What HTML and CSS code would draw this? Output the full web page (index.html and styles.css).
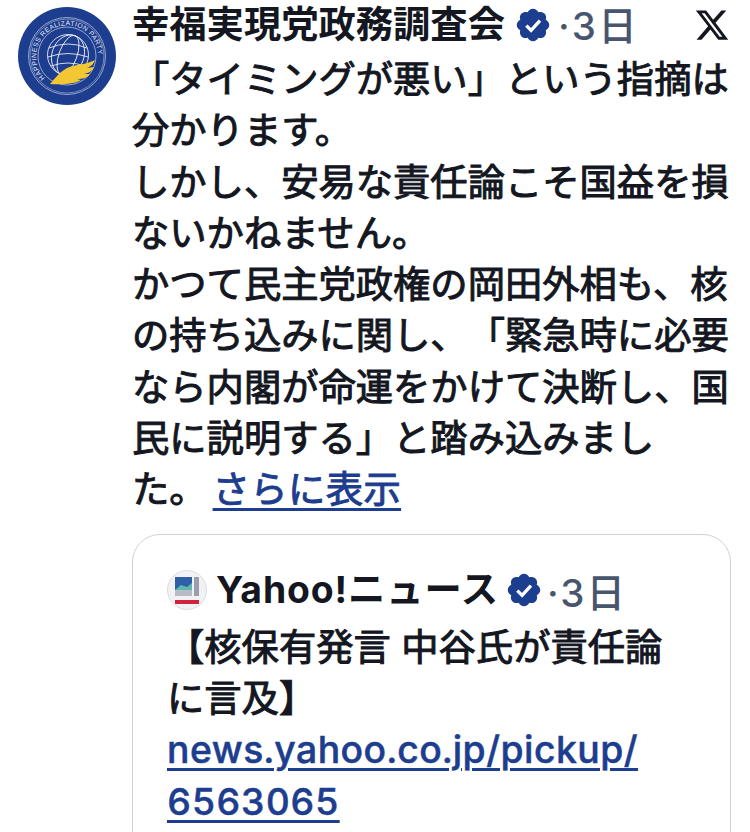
FILE: index.html
```html
<!DOCTYPE html>
<html lang="ja">
<head>
    <meta charset="UTF-8">
    <meta name="viewport" content="width=device-width, initial-scale=1.0">
    <title>幸福実現党政務調査会</title>
    <link rel="stylesheet" href="styles.css">
</head>
<body>

<div class="post">
    <svg class="avatar" viewBox="0 0 98 98">
        <defs>
            <path id="ringText" d="M27 71 A31 31 0 1 1 80 53"></path>
        </defs>
        <circle cx="49" cy="49" r="49" fill="#1d3d8f"></circle>
        <circle cx="49" cy="49" r="38.500" fill="none" stroke="#c9d3e8" stroke-width="0.7"></circle>
        <circle cx="49" cy="49" r="37" fill="none" stroke="#c9d3e8" stroke-width="0.5"></circle>
        <circle cx="49" cy="49" r="29" fill="none" stroke="#c9d3e8" stroke-width="0.7"></circle>
        <text class="avatar-ring"><textPath href="#ringText" textLength="119">HAPPINESS REALIZATION PARTY</textPath></text>
        <g fill="none" stroke="#e6eaf4" stroke-width="0.9">
            <circle cx="50" cy="48" r="20.500"></circle>
            <ellipse cx="50" cy="48" rx="9" ry="20.500" transform="rotate(20 50 48)"></ellipse>
            <ellipse cx="50" cy="48" rx="16" ry="20.500" transform="rotate(20 50 48)"></ellipse>
            <path d="M31 41 Q50 33 69 41 M30 50 Q50 43 70 50 M33 59 Q50 53 67 59"></path>
        </g>
        <path d="M32 77 C37 71 42 65 49 61 C58 57 68 58 77 53 C76 56 74 59 69 61 L76 60 C74 64 71 66 66 67 L72 67 C69 71 65 72 59 72 L63 73 C58 77 42 78 32 77 Z" fill="#f3c633"></path>
    </svg>

    <div class="post-main">
        <div class="post-header">
            <span class="name">幸福実現党政務調査会</span>
            <svg class="verified" viewBox="0 0 24 24">
                <path d="M22.25 12c0-1.43-.88-2.67-2.19-3.34.46-1.39.2-2.9-.81-3.91s-2.52-1.27-3.91-.81c-.66-1.31-1.91-2.19-3.34-2.19s-2.67.88-3.33 2.19c-1.4-.46-2.91-.2-3.92.81s-1.26 2.52-.8 3.91c-1.31.67-2.2 1.91-2.2 3.34s.89 2.67 2.2 3.34c-.46 1.39-.21 2.9.8 3.91s2.52 1.26 3.91.81c.67 1.31 1.91 2.19 3.34 2.19s2.68-.88 3.34-2.19c1.39.45 2.9.2 3.91-.81s1.27-2.52.81-3.91c1.31-.67 2.19-1.91 2.19-3.34z" fill="#1d3d8f"></path>
                <path d="M7.8 12.4l3 3 5.6-6.2" fill="none" stroke="#fff" stroke-width="2.1"></path>
            </svg>
            <span class="time">·3日</span>
            <svg class="x-logo" viewBox="0 0 24 24">
                <path d="M18.244 2.25h3.308l-7.227 8.26 8.502 11.24H16.17l-5.214-6.817L4.99 21.75H1.68l7.73-8.835L1.254 2.25H8.08l4.713 6.231zm-1.161 17.52h1.833L7.084 4.126H5.117z" fill="#14171f"></path>
            </svg>
        </div>

        <p class="post-text">「タイミングが悪い」という指摘は<br>分かります。<br>しかし、安易な責任論こそ国益を損<br>ないかねません。<br>かつて民主党政権の岡田外相も、核<br>の持ち込みに関し、「緊急時に必要<br>なら内閣が命運をかけて決断し、国<br>民に説明する」と踏み込みまし<br>た。<a class="link more" href="#">さらに表示</a></p>

        <div class="quote">
            <div class="quote-header">
                <svg class="quote-avatar" viewBox="0 0 40 40">
                    <circle cx="20" cy="20" r="19.500" fill="#f2f2f4" stroke="#dcdce0" stroke-width="1"></circle>
                    <rect x="8" y="7" width="17" height="13" fill="#2f5fa8"></rect>
                    <path d="M8 20 L14 15 L20 17 L25 13 V20 Z" fill="#5fb8b0"></path>
                    <rect x="8" y="20" width="17" height="6" fill="#b9bcc4"></rect>
                    <rect x="27" y="7" width="5" height="19" fill="#9aa0ab"></rect>
                    <rect x="8" y="30" width="24" height="4" fill="#d0243c"></rect>
                </svg>
                <span class="name quote-name">Yahoo!ニュース</span>
                <svg class="verified" viewBox="0 0 24 24">
                    <path d="M22.25 12c0-1.43-.88-2.67-2.19-3.34.46-1.39.2-2.9-.81-3.91s-2.52-1.27-3.91-.81c-.66-1.31-1.91-2.19-3.34-2.19s-2.67.88-3.33 2.19c-1.4-.46-2.91-.2-3.92.81s-1.26 2.52-.8 3.91c-1.31.67-2.2 1.91-2.2 3.34s.89 2.67 2.2 3.34c-.46 1.39-.21 2.9.8 3.91s2.52 1.26 3.91.81c.67 1.31 1.91 2.19 3.34 2.19s2.68-.88 3.34-2.19c1.39.45 2.9.2 3.91-.81s1.27-2.52.81-3.91c1.31-.67 2.19-1.91 2.19-3.34z" fill="#1d3d8f"></path>
                    <path d="M7.8 12.4l3 3 5.6-6.2" fill="none" stroke="#fff" stroke-width="2.1"></path>
                </svg>
                <span class="time">·3日</span>
            </div>
            <p class="post-text">【核保有発言 中谷氏が責任論<br>に言及】<br><a class="link url" href="#">news.yahoo.co.jp/pickup/<br>6563065</a></p>
        </div>
    </div>
</div>

</body>
</html>
```

FILE: styles.css
```css
html, body {
    height: 832px;
    overflow: hidden;
}

body {
    margin: 0;
    background-color: #fff;
    color: #14171f;
    font-family: 'Inter', 'Noto Sans CJK JP', sans-serif;
    font-size: 37.3px;
    font-weight: 400;
    text-spacing-trim: space-all;
}

.post {
    display: flex;
    gap: 16px;
    padding: 7px 0 0 18px;
}

.avatar {
    width: 98px;
    height: 98px;
    flex-shrink: 0;
}

.avatar-ring {
    font-family: 'Liberation Sans', sans-serif;
    font-size: 6.8px;
    fill: #e4e9f4;
}

.post-main {
    width: 599px;
}

.post-header {
    display: flex;
    align-items: center;
    height: 36px;
}

.name {
    font-weight: 700;
    line-height: 36px;
    white-space: nowrap;
}

.quote-name {
    letter-spacing: 0.9px;
}

.verified {
    width: 38px;
    height: 38px;
    margin-left: 9px;
    flex-shrink: 0;
}

.time {
    color: #47556e;
    font-size: 38.5px;
    font-weight: 500;
    letter-spacing: 2.4px;
    margin-left: 6px;
    margin-top: -4px;
    white-space: nowrap;
}

.x-logo {
    width: 36px;
    height: 36px;
    margin-left: auto;
    margin-right: 1px;
}

.post-text {
    margin: 11px 0 0 0;
    line-height: 51.3px;
    white-space: nowrap;
    -webkit-text-stroke: 1px currentColor;
}

.link {
    color: #1d3d8f;
    text-decoration: underline;
    text-decoration-thickness: 2.5px;
    text-underline-offset: 5px;
}

.more {
    margin-left: 6px;
    letter-spacing: 0.4px;
}

.url {
    font-weight: 500;
    font-variant-numeric: tabular-nums;
    letter-spacing: 0.5px;
    -webkit-text-stroke: 0.5px currentColor;
}

.quote {
    margin-top: 18px;
    padding: 33px 34px 0 34px;
    height: 300px;
    border: 1px solid #cfd3d8;
    border-radius: 28px;
}

.quote-header {
    display: flex;
    align-items: center;
    height: 44px;
}

.quote-header .verified {
    margin-left: 6px;
}

.quote-header .time {
    margin-left: 4px;
    margin-top: 0;
    letter-spacing: 2px;
}

.quote-avatar {
    width: 40px;
    height: 40px;
    margin-right: 9px;
    flex-shrink: 0;
}

.quote .post-text {
    margin-top: 10px;
}
```
